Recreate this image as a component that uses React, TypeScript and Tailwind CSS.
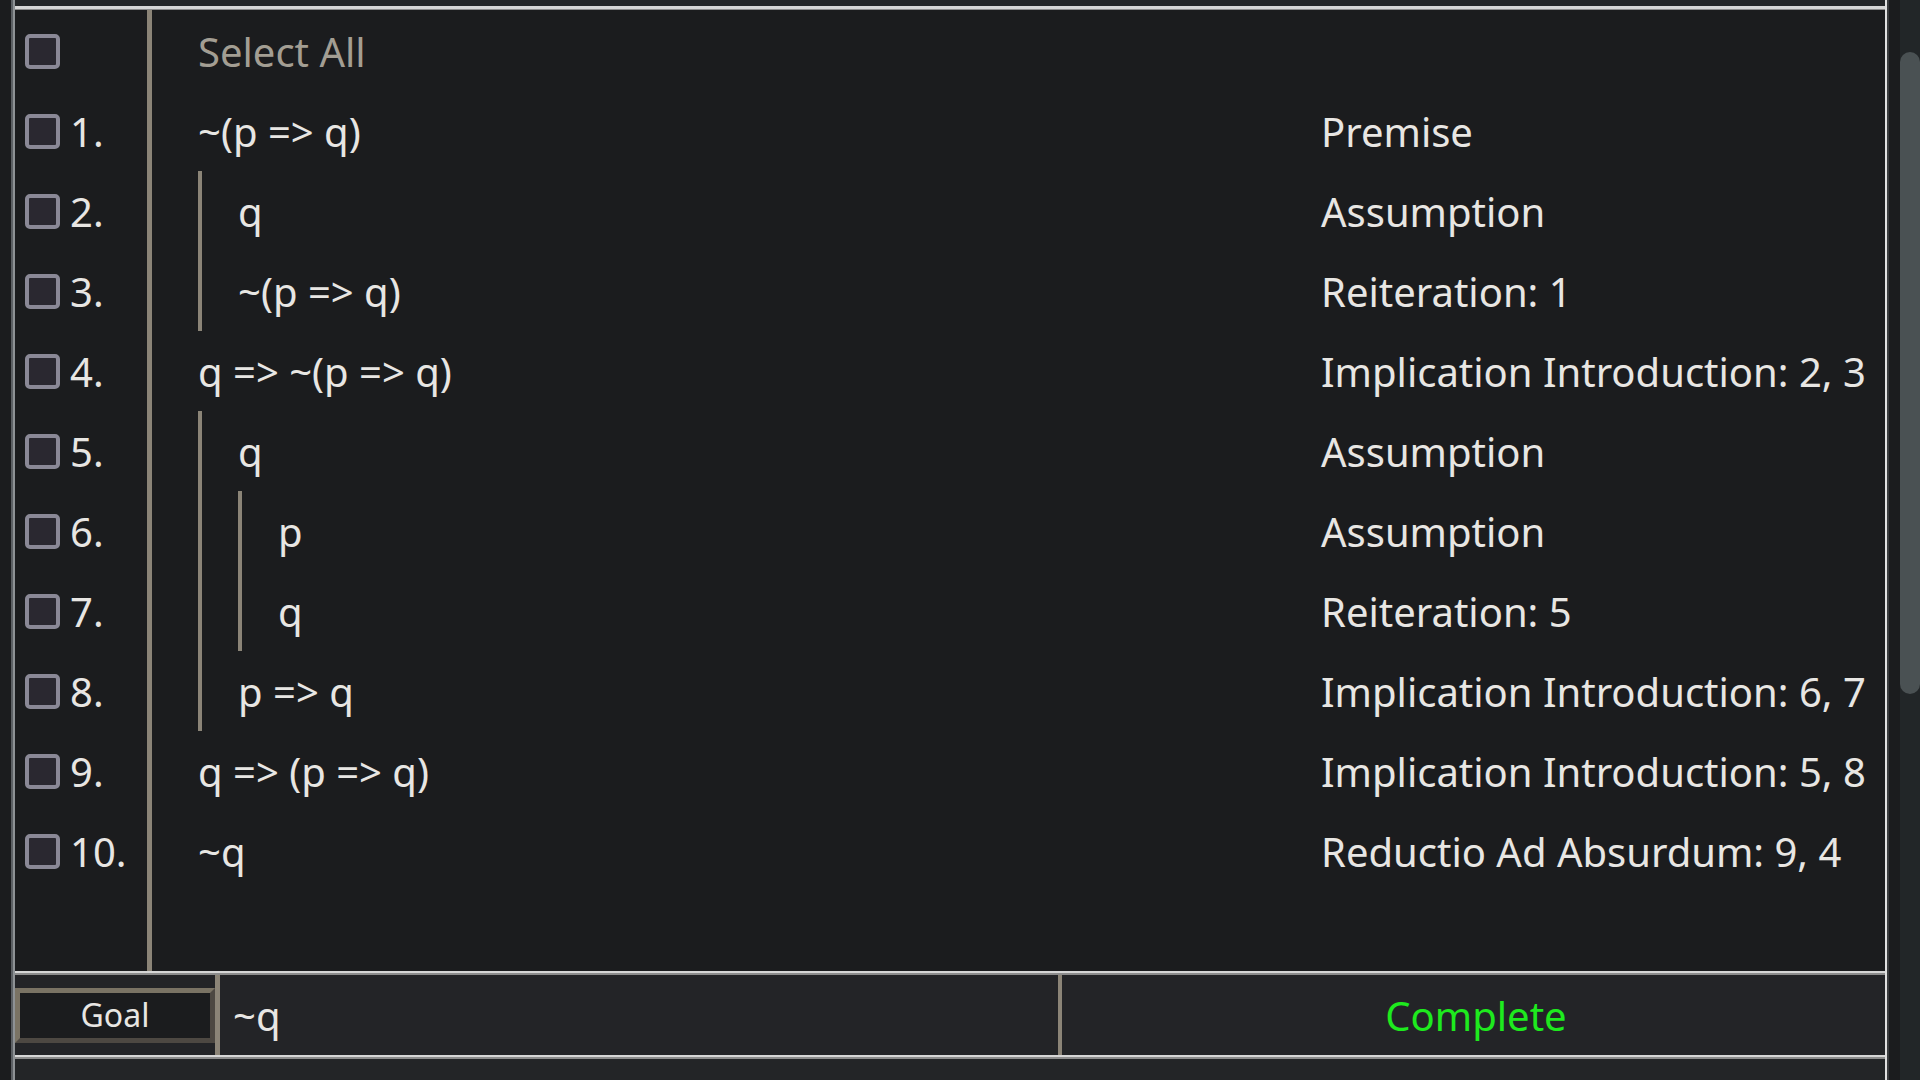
import React from "react";

type Row = { n: number; f: string; d: number; j: string };

const rows: Row[] = [
  { n: 1, f: "~(p => q)", d: 0, j: "Premise" },
  { n: 2, f: "q", d: 1, j: "Assumption" },
  { n: 3, f: "~(p => q)", d: 1, j: "Reiteration: 1" },
  { n: 4, f: "q => ~(p => q)", d: 0, j: "Implication Introduction: 2, 3" },
  { n: 5, f: "q", d: 1, j: "Assumption" },
  { n: 6, f: "p", d: 2, j: "Assumption" },
  { n: 7, f: "q", d: 2, j: "Reiteration: 5" },
  { n: 8, f: "p => q", d: 1, j: "Implication Introduction: 6, 7" },
  { n: 9, f: "q => (p => q)", d: 0, j: "Implication Introduction: 5, 8" },
  { n: 10, f: "~q", d: 0, j: "Reductio Ad Absurdum: 9, 4" },
];

function Box() {
  return (
    <div className="ml-[10px] w-[35px] h-[35px] shrink-0 rounded-[5px] border-[4px] border-[#8a8896] bg-[#2a2830]" />
  );
}

export default function App() {
  const font = { fontFamily: '"Noto Sans", "Open Sans", sans-serif' };
  return (
    <div
      className="w-[1920px] h-[1080px] overflow-hidden flex bg-[#1b1c1e] text-[#e8e6e3]"
      style={font}
    >
      <div className="w-[11px] shrink-0 bg-[#1b1c1e]" />
      {/* panel */}
      <div className="w-[1878px] shrink-0 flex">
        <div className="w-[2px] bg-[#5c6064]" />
        <div className="w-[2px] bg-[#8e9295]" />
        <div className="flex-1 flex flex-col">
          <div className="h-[6px] bg-[#232527]" />
          <div className="h-[3px] bg-[#d6d6d6]" />
          <div className="h-[1px] bg-[#8c8c8c]" />
          {/* main */}
          <div className="h-[961px] flex bg-[#1b1c1e]">
            <div className="w-[132px] flex flex-col pt-[1px]">
              <div className="h-[80px] flex items-center">
                <Box />
              </div>
              {rows.map((r) => (
                <div key={r.n} className="h-[80px] flex items-center">
                  <Box />
                  <span className="ml-[10px] pt-[2px] text-[40px] leading-none">{r.n}.</span>
                </div>
              ))}
            </div>
            <div className="w-[5px] bg-[#8b8477]" />
            <div className="flex-1 flex flex-col pt-[1px]">
              <div className="h-[80px] flex items-center pl-[46px] pt-[2px] text-[40px] leading-none text-[#a39e93]">
                Select All
              </div>
              {rows.map((r) => (
                <div key={r.n} className="h-[80px] flex">
                  <div className="flex-1 flex pl-[46px]">
                    {Array.from({ length: r.d }).map((_, i) => (
                      <div key={i} className="w-[4px] mr-[36px] bg-[#8b8477] self-stretch" />
                    ))}
                    <div className="flex items-center pt-[2px] text-[40px] leading-none">{r.f}</div>
                  </div>
                  <div className="w-[564px] flex items-center pt-[2px] text-[40px] leading-none">{r.j}</div>
                </div>
              ))}
            </div>
          </div>
          <div className="h-[2px] bg-[#d6d6d6]" />
          <div className="h-[2px] bg-[#8c8c8c]" />
          {/* goal row */}
          <div className="h-[80px] flex bg-[#232427]">
            <div className="w-[200px] flex items-center">
              <div className="w-[200px] h-[55px] border-[5px] border-t-[#7a7364] border-l-[#7a7364] border-b-[#4d4842] border-r-[#4d4842] bg-[#1b1c1e] flex items-center justify-center text-[32px] leading-none">
                Goal
              </div>
            </div>
            <div className="w-[5px] bg-[#8b8477]" />
            <div className="w-[838px] flex items-center pl-[13px] pt-[1px] text-[40px] leading-none">~q</div>
            <div className="w-[4px] bg-[#8b8477]" />
            <div className="flex-1 flex items-center justify-center pl-[5px] pt-[1px] text-[40px] leading-none text-[#1eea1e]">
              Complete
            </div>
          </div>
          <div className="h-[2px] bg-[#d6d6d6]" />
          <div className="h-[2px] bg-[#8c8c8c]" />
          <div className="flex-1 bg-[#232527]" />
        </div>
        <div className="w-[2px] bg-[#e0e0e0]" />
        <div className="w-[2px] bg-[#3a3c3e]" />
      </div>
      <div className="w-[11px] shrink-0 bg-[#1b1c1e]" />
      <div className="w-[20px] shrink-0 bg-[#222628] flex flex-col">
        <div className="mt-[52px] h-[642px] rounded-full bg-[#4a5153]" />
      </div>
    </div>
  );
}
